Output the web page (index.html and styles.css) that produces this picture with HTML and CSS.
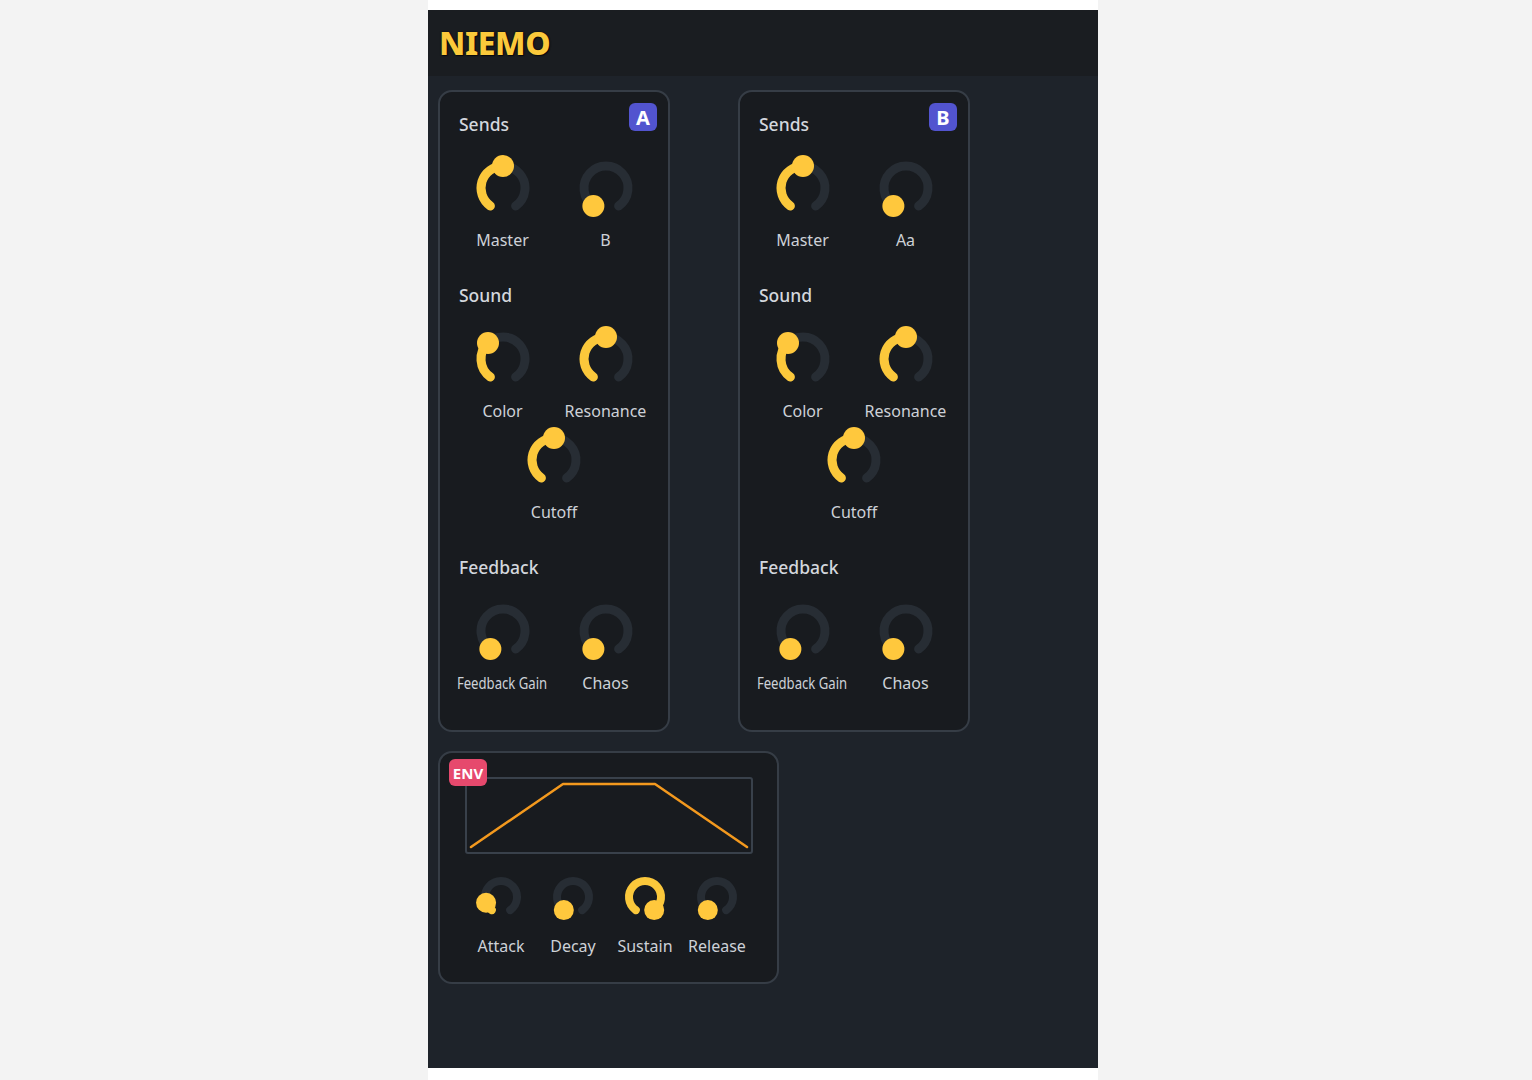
FILE: index.html
```html
<!DOCTYPE html>
<html lang="en">
<head>
<meta charset="utf-8">
<title>NIEMO</title>
<link rel="stylesheet" href="styles.css">
</head>
<body>
<div class="page">
  <div class="app">
    <header class="header"><h1 class="logo">NIEMO</h1></header>
    <main class="content">
      <div class="row">
        <section class="panel">
          <span class="badge badge-a">A</span>
          <div class="group">
            <h2 class="title">Sends</h2>
            <div class="knobs">
              <div class="knob">
                <svg class="dial" viewBox="0 0 56 56" width="56" height="56"><path class="track" d="M15.38 46.02 A22 22 0 1 1 40.62 46.02"/><path class="val" d="M15.38 46.02 A22 22 0 0 1 28 6"/><circle class="dot" cx="28" cy="6" r="11"/></svg>
                <span class="label">Master</span>
              </div>
              <div class="knob">
                <svg class="dial" viewBox="0 0 56 56" width="56" height="56"><path class="track" d="M15.38 46.02 A22 22 0 1 1 40.62 46.02"/><circle class="dot" cx="15.38" cy="46.02" r="11"/></svg>
                <span class="label">B</span>
              </div>
            </div>
          </div>
          <div class="group">
            <h2 class="title">Sound</h2>
            <div class="knobs">
              <div class="knob">
                <svg class="dial" viewBox="0 0 56 56" width="56" height="56"><path class="track" d="M15.38 46.02 A22 22 0 1 1 40.62 46.02"/><path class="val" d="M15.38 46.02 A22 22 0 0 1 13 11.91"/><circle class="dot" cx="13" cy="11.91" r="11"/></svg>
                <span class="label">Color</span>
              </div>
              <div class="knob">
                <svg class="dial" viewBox="0 0 56 56" width="56" height="56"><path class="track" d="M15.38 46.02 A22 22 0 1 1 40.62 46.02"/><path class="val" d="M15.38 46.02 A22 22 0 0 1 28 6"/><circle class="dot" cx="28" cy="6" r="11"/></svg>
                <span class="label">Resonance</span>
              </div>
              <div class="knob span">
                <svg class="dial" viewBox="0 0 56 56" width="56" height="56"><path class="track" d="M15.38 46.02 A22 22 0 1 1 40.62 46.02"/><path class="val" d="M15.38 46.02 A22 22 0 0 1 28 6"/><circle class="dot" cx="28" cy="6" r="11"/></svg>
                <span class="label">Cutoff</span>
              </div>
            </div>
          </div>
          <div class="group">
            <h2 class="title">Feedback</h2>
            <div class="knobs">
              <div class="knob">
                <svg class="dial" viewBox="0 0 56 56" width="56" height="56"><path class="track" d="M15.38 46.02 A22 22 0 1 1 40.62 46.02"/><circle class="dot" cx="15.38" cy="46.02" r="11"/></svg>
                <span class="label"><span class="narrow">Feedback Gain</span></span>
              </div>
              <div class="knob">
                <svg class="dial" viewBox="0 0 56 56" width="56" height="56"><path class="track" d="M15.38 46.02 A22 22 0 1 1 40.62 46.02"/><circle class="dot" cx="15.38" cy="46.02" r="11"/></svg>
                <span class="label">Chaos</span>
              </div>
            </div>
          </div>
        </section>

        <section class="panel">
          <span class="badge badge-a">B</span>
          <div class="group">
            <h2 class="title">Sends</h2>
            <div class="knobs">
              <div class="knob">
                <svg class="dial" viewBox="0 0 56 56" width="56" height="56"><path class="track" d="M15.38 46.02 A22 22 0 1 1 40.62 46.02"/><path class="val" d="M15.38 46.02 A22 22 0 0 1 28 6"/><circle class="dot" cx="28" cy="6" r="11"/></svg>
                <span class="label">Master</span>
              </div>
              <div class="knob">
                <svg class="dial" viewBox="0 0 56 56" width="56" height="56"><path class="track" d="M15.38 46.02 A22 22 0 1 1 40.62 46.02"/><circle class="dot" cx="15.38" cy="46.02" r="11"/></svg>
                <span class="label">Aa</span>
              </div>
            </div>
          </div>
          <div class="group">
            <h2 class="title">Sound</h2>
            <div class="knobs">
              <div class="knob">
                <svg class="dial" viewBox="0 0 56 56" width="56" height="56"><path class="track" d="M15.38 46.02 A22 22 0 1 1 40.62 46.02"/><path class="val" d="M15.38 46.02 A22 22 0 0 1 13 11.91"/><circle class="dot" cx="13" cy="11.91" r="11"/></svg>
                <span class="label">Color</span>
              </div>
              <div class="knob">
                <svg class="dial" viewBox="0 0 56 56" width="56" height="56"><path class="track" d="M15.38 46.02 A22 22 0 1 1 40.62 46.02"/><path class="val" d="M15.38 46.02 A22 22 0 0 1 28 6"/><circle class="dot" cx="28" cy="6" r="11"/></svg>
                <span class="label">Resonance</span>
              </div>
              <div class="knob span">
                <svg class="dial" viewBox="0 0 56 56" width="56" height="56"><path class="track" d="M15.38 46.02 A22 22 0 1 1 40.62 46.02"/><path class="val" d="M15.38 46.02 A22 22 0 0 1 28 6"/><circle class="dot" cx="28" cy="6" r="11"/></svg>
                <span class="label">Cutoff</span>
              </div>
            </div>
          </div>
          <div class="group">
            <h2 class="title">Feedback</h2>
            <div class="knobs">
              <div class="knob">
                <svg class="dial" viewBox="0 0 56 56" width="56" height="56"><path class="track" d="M15.38 46.02 A22 22 0 1 1 40.62 46.02"/><circle class="dot" cx="15.38" cy="46.02" r="11"/></svg>
                <span class="label"><span class="narrow">Feedback Gain</span></span>
              </div>
              <div class="knob">
                <svg class="dial" viewBox="0 0 56 56" width="56" height="56"><path class="track" d="M15.38 46.02 A22 22 0 1 1 40.62 46.02"/><circle class="dot" cx="15.38" cy="46.02" r="11"/></svg>
                <span class="label">Chaos</span>
              </div>
            </div>
          </div>
        </section>
      </div>

      <section class="panel env">
        <span class="badge badge-env">ENV</span>
        <div class="graph">
          <svg viewBox="0 0 284 73" width="284" height="73"><polyline points="4,68 96,5 188,5 280,68"/></svg>
        </div>
        <div class="env-knobs">
          <div class="knob small">
            <svg class="dial" viewBox="0 0 44 44" width="44" height="44"><path class="track" d="M12.82 35.11 A16 16 0 1 1 31.18 35.11"/><path class="val" d="M12.82 35.11 A16 16 0 0 1 7.06 27.73"/><circle class="dot" cx="7.06" cy="27.73" r="10"/></svg>
            <span class="label">Attack</span>
          </div>
          <div class="knob small">
            <svg class="dial" viewBox="0 0 44 44" width="44" height="44"><path class="track" d="M12.82 35.11 A16 16 0 1 1 31.18 35.11"/><circle class="dot" cx="12.82" cy="35.11" r="10"/></svg>
            <span class="label">Decay</span>
          </div>
          <div class="knob small">
            <svg class="dial" viewBox="0 0 44 44" width="44" height="44"><path class="track" d="M12.82 35.11 A16 16 0 1 1 31.18 35.11"/><path class="val" d="M12.82 35.11 A16 16 0 1 1 31.18 35.11"/><circle class="dot" cx="31.18" cy="35.11" r="10"/></svg>
            <span class="label">Sustain</span>
          </div>
          <div class="knob small">
            <svg class="dial" viewBox="0 0 44 44" width="44" height="44"><path class="track" d="M12.82 35.11 A16 16 0 1 1 31.18 35.11"/><circle class="dot" cx="12.82" cy="35.11" r="10"/></svg>
            <span class="label">Release</span>
          </div>
        </div>
      </section>
    </main>
  </div>
</div>
</body>
</html>
```

FILE: styles.css
```css
* { box-sizing: border-box; }

html, body {
  margin: 0;
  padding: 0;
  background: #f3f3f3;
  font-family: "Noto Sans", "Open Sans", "DejaVu Sans", sans-serif;
}

.page {
  width: 670px;
  min-height: 100vh;
  margin-left: 428px;
  padding-top: 10px;
  background: #ffffff;
}

.app {
  height: 1058px;
  background: #1e232a;
}

.header {
  height: 66px;
  background: #1a1d21;
  display: flex;
  align-items: center;
  padding-left: 11px;
}

.logo {
  margin: 0;
  font-size: 32px;
  font-weight: 800;
  line-height: 1;
  color: #fbc93b;
  letter-spacing: -0.4px;
  text-shadow: 0 0 2px rgba(0, 0, 0, 0.9), 1px 1px 1px rgba(0, 0, 0, 0.6);
}

.content {
  padding: 14px 10px;
  display: flex;
  flex-direction: column;
  align-items: flex-start;
  gap: 19px;
}

.row {
  display: flex;
  gap: 68px;
}

.panel {
  position: relative;
  width: 232px;
  background: #181b1f;
  border: 2px solid #363d46;
  border-radius: 14px;
  padding: 20px 11px 37px;
}

.group + .group {
  margin-top: 33px;
}

.title {
  margin: 0 0 24px;
  padding-left: 8px;
  font-size: 17.5px;
  font-weight: 500;
  line-height: 24px;
  color: #d3d7dd;
}

.badge {
  position: absolute;
  display: flex;
  align-items: center;
  justify-content: center;
  color: #ffffff;
  font-weight: 700;
  border-radius: 6px;
}

.badge-a {
  top: 11px;
  right: 11px;
  width: 28px;
  height: 28px;
  font-size: 20px;
  background: #5254cf;
}

.badge-env {
  top: 6px;
  left: 9px;
  width: 38px;
  height: 27px;
  font-size: 15px;
  background: #e6496d;
  z-index: 1;
}

.knobs {
  display: grid;
  grid-template-columns: repeat(2, 103px);
  row-gap: 11px;
}

.knob {
  display: flex;
  flex-direction: column;
  align-items: center;
}

.knob.span {
  grid-column: 1 / -1;
}

.dial {
  display: block;
  overflow: visible;
}

.track,
.val {
  fill: none;
  stroke-width: 9;
  stroke-linecap: round;
}

.track { stroke: #272d34; }
.val { stroke: #fbc83b; }
.dot { fill: #ffc83d; }

.small .track,
.small .val {
  stroke-width: 8;
}

.label {
  margin-top: 14px;
  font-size: 16px;
  line-height: 20px;
  color: #cdd1d7;
  white-space: nowrap;
}

.narrow {
  display: inline-block;
  transform: scaleX(0.82);
}

.env {
  width: 341px;
  padding: 24px 24px 26px 25px;
}

.graph {
  width: 288px;
  height: 77px;
  border: 2px solid #39414b;
  border-radius: 3px;
}

.graph svg {
  display: block;
}

.graph polyline {
  fill: none;
  stroke: #f3991e;
  stroke-width: 2.5;
  stroke-linejoin: round;
  stroke-linecap: round;
}

.env-knobs {
  margin-top: 21px;
  display: grid;
  grid-template-columns: repeat(4, 72px);
}

.small .label {
  margin-top: 17px;
}
```
